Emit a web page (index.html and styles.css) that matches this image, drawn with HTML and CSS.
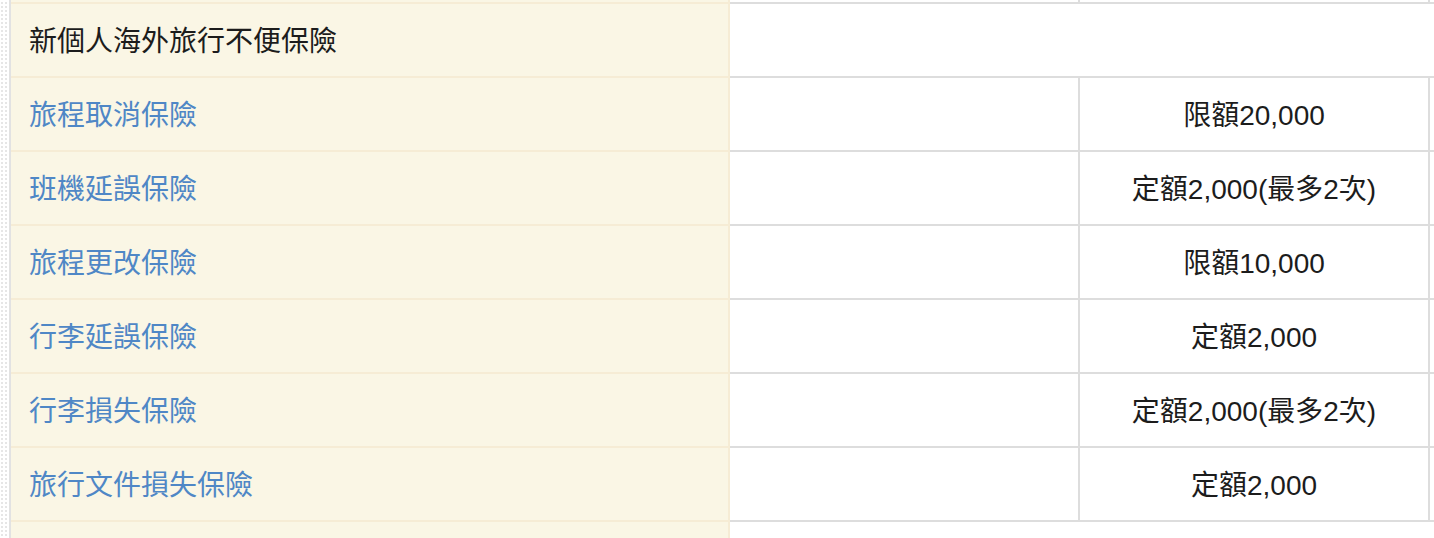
FILE: index.html
```html
<!DOCTYPE html>
<html lang="zh-Hant">
<head>
    <meta charset="UTF-8">
    <meta name="viewport" content="width=device-width, initial-scale=1.0">
    <title>保障內容</title>
    <link rel="stylesheet" href="styles.css">
</head>
<body>
    <div class="page">
        <div class="gutter"></div>
        <div class="sheet">
            <table class="plan">
                <colgroup>
                    <col class="col-name">
                    <col class="col-amt">
                    <col class="col-amt">
                    <col class="col-amt">
                </colgroup>
                <tr class="stub">
                    <td class="name"></td>
                    <td></td>
                    <td></td>
                    <td></td>
                </tr>
                <tr>
                    <td class="name group">新個人海外旅行不便保險</td>
                    <td colspan="3"></td>
                </tr>
                <tr>
                    <td class="name"><a href="#">旅程取消保險</a></td>
                    <td></td>
                    <td class="amt">限額20,000</td>
                    <td></td>
                </tr>
                <tr>
                    <td class="name"><a href="#">班機延誤保險</a></td>
                    <td></td>
                    <td class="amt">定額2,000(最多2次)</td>
                    <td></td>
                </tr>
                <tr>
                    <td class="name"><a href="#">旅程更改保險</a></td>
                    <td></td>
                    <td class="amt">限額10,000</td>
                    <td></td>
                </tr>
                <tr>
                    <td class="name"><a href="#">行李延誤保險</a></td>
                    <td></td>
                    <td class="amt">定額2,000</td>
                    <td></td>
                </tr>
                <tr>
                    <td class="name"><a href="#">行李損失保險</a></td>
                    <td></td>
                    <td class="amt">定額2,000(最多2次)</td>
                    <td></td>
                </tr>
                <tr>
                    <td class="name"><a href="#">旅行文件損失保險</a></td>
                    <td></td>
                    <td class="amt">定額2,000</td>
                    <td></td>
                </tr>
                <tr>
                    <td class="name group"></td>
                    <td colspan="3"></td>
                </tr>
            </table>
        </div>
    </div>
</body>
</html>
```

FILE: styles.css
```css
* {
    box-sizing: border-box;
}
body {
    margin: 0;
    overflow: hidden;
    background: #fff;
    font-family: "Liberation Sans", "Noto Sans CJK TC", sans-serif;
    color: #1c1c1c;
}
.page {
    display: flex;
}
.gutter {
    width: 9px;
    flex: none;
    background-color: #fff;
    background-image: radial-gradient(circle, #e6e6e6 0.9px, transparent 1.2px);
    background-size: 4px 4px;
    background-position: 0 1px;
}
.sheet {
    flex: none;
    border-left: 2px solid #e2e2e2;
}
.plan {
    border-collapse: separate;
    border-spacing: 0;
    table-layout: fixed;
    width: 1769px;
}
.col-name {
    width: 719px;
}
.col-amt {
    width: 350px;
}
.plan td {
    height: 74px;
    padding: 3px 0 0;
    font-size: 28px;
    line-height: 1.2;
    border-right: 2px solid #dddddd;
    border-bottom: 2px solid #dddddd;
    vertical-align: middle;
}
.plan td.name {
    background: #faf6e5;
    border-color: #f6ecd5;
    padding-left: 18px;
}
.plan .stub td {
    height: 4px;
    padding: 0;
    font-size: 0;
    line-height: 0;
}
.plan td.amt {
    text-align: center;
}
.plan a {
    color: #4f87c6;
    text-decoration: none;
}
```
